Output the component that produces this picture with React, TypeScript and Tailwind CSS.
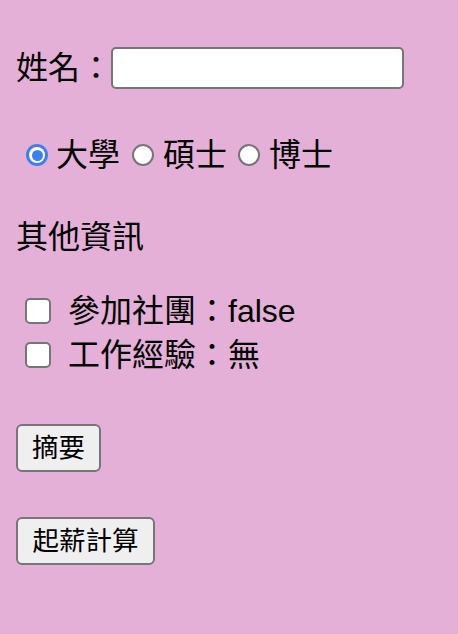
import React from "react";

const font = { fontFamily: '"Liberation Sans", "Noto Sans CJK TC", sans-serif' };

function Radio({ checked }: { checked?: boolean }) {
  if (checked) {
    return (
      <span className="flex h-[22px] w-[22px] shrink-0 items-center justify-center rounded-full bg-[#3b7ff5]">
        <span className="flex h-[16px] w-[16px] items-center justify-center rounded-full bg-white">
          <span className="h-[11px] w-[11px] rounded-full bg-[#3b7ff5]" />
        </span>
      </span>
    );
  }
  return <span className="block h-[22px] w-[22px] shrink-0 rounded-full border-2 border-[#767676] bg-white" />;
}

function Checkbox() {
  return <span className="block h-[26px] w-[26px] shrink-0 rounded-[5px] border-2 border-[#767676] bg-white" />;
}

export default function App() {
  return (
    <div
      className="flex min-h-screen flex-col bg-[#e4b0d7] pl-[16px] text-[32px] leading-none text-black"
      style={font}
    >
      <div className="mt-[47px] flex h-[42px] items-center">
        <span>姓名：</span>
        <span className="ml-[-1px] block h-[42px] w-[293px] rounded-[5px] border-2 border-[#767676] bg-white" />
      </div>

      <div className="mt-[44px] flex h-[44px] items-center">
        <span className="ml-[10px]"><Radio checked /></span>
        <span className="ml-[8px]">大學</span>
        <span className="ml-[12px]"><Radio /></span>
        <span className="ml-[9px]">碩士</span>
        <span className="ml-[11px]"><Radio /></span>
        <span className="ml-[9px]">博士</span>
      </div>

      <div className="mt-[38px] flex h-[44px] items-center">其他資訊</div>

      <div className="mt-[30px] flex h-[44px] items-center">
        <span className="ml-[9px]"><Checkbox /></span>
        <span className="ml-[17px]">參加社團：false</span>
      </div>
      <div className="flex h-[44px] items-center">
        <span className="ml-[9px]"><Checkbox /></span>
        <span className="ml-[17px]">工作經驗：無</span>
      </div>

      <div className="mt-[47px] flex">
        <button className="flex h-[48px] w-[85px] items-center justify-center rounded-[6px] border-2 border-[#767676] bg-[#efefef] text-[26.5px] leading-none text-black">
          摘要
        </button>
      </div>
      <div className="mt-[45px] flex">
        <button className="flex h-[48px] w-[139px] items-center justify-center rounded-[6px] border-2 border-[#767676] bg-[#efefef] text-[26.5px] leading-none text-black">
          起薪計算
        </button>
      </div>
    </div>
  );
}
